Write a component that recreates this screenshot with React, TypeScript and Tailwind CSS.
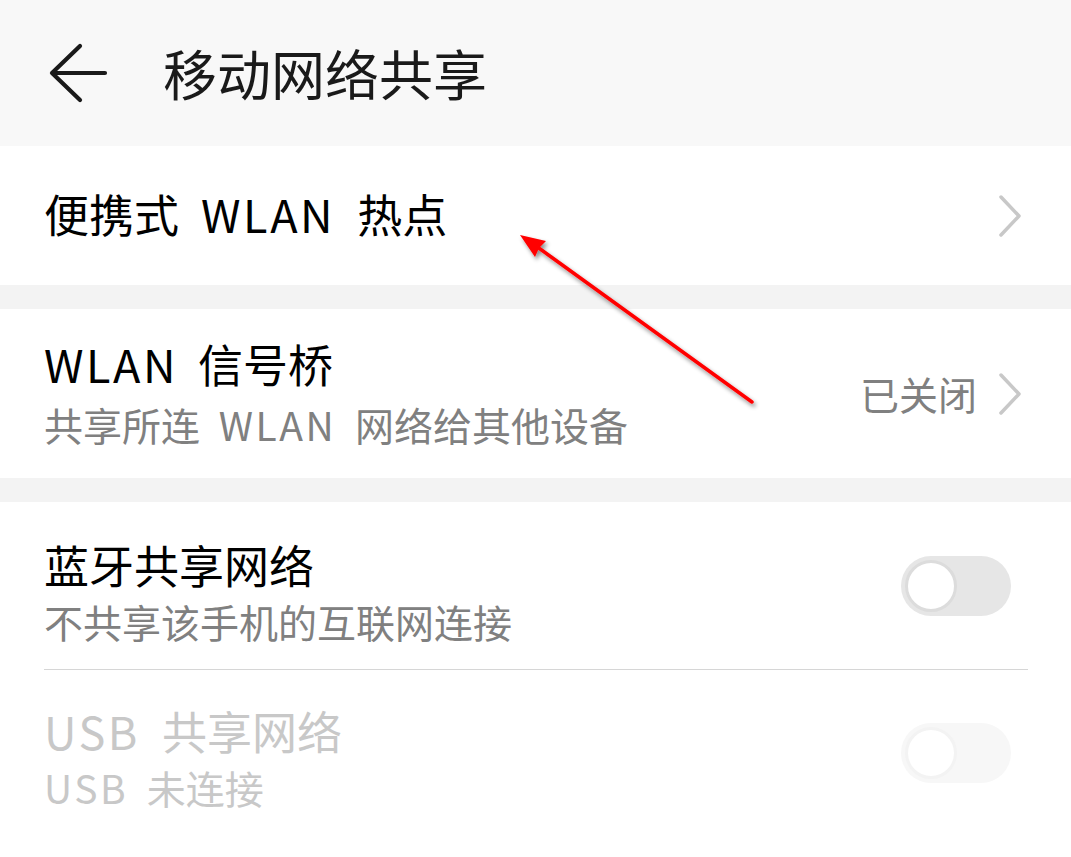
import React from 'react';

const font = { fontFamily: '"Noto Sans CJK SC", "Noto Sans", sans-serif' };

// Latin words in the reference font run a little wider than Noto's
function L({ children }: { children: React.ReactNode }) {
  return <span className="tracking-[2.5px]">{children}</span>;
}

function Chevron() {
  return (
    <svg width="26" height="44" viewBox="0 0 26 44" className="shrink-0">
      <path d="M4 3 L22 22 L4 41" fill="none" stroke="#c8c8c8" strokeWidth="3.5" strokeLinecap="round" strokeLinejoin="round" />
    </svg>
  );
}

function Toggle({ disabled }: { disabled?: boolean }) {
  return (
    <div
      className={
        disabled
          ? 'w-[110px] h-[60px] rounded-full bg-[#f7f7f7] flex items-center pl-[4px] shrink-0'
          : 'w-[110px] h-[60px] rounded-full bg-[#e6e6e6] flex items-center pl-[4px] shrink-0'
      }
    >
      <div
        className={
          disabled
            ? 'w-[52px] h-[52px] rounded-full bg-white border-[3px] border-[#f3f3f3]'
            : 'w-[52px] h-[52px] rounded-full bg-white border-[3px] border-[#dcdcdc]'
        }
      />
    </div>
  );
}

export default function App() {
  return (
    <div className="relative w-[1071px] h-[857px] overflow-hidden bg-[#f3f3f3]" style={font}>
      {/* Header */}
      <div className="h-[146px] bg-[#f8f8f8] flex items-center">
        <svg width="64" height="64" viewBox="0 0 64 64" className="ml-[46px]">
          <path d="M34 5 L6 32 L34 59 M6 32 L59 32" fill="none" stroke="#1a1a1a" strokeWidth="4.2" strokeLinecap="round" strokeLinejoin="round" />
        </svg>
        <span className="ml-[53px] text-[54px] leading-none text-[#1a1a1a]">移动网络共享</span>
      </div>

      {/* Portable hotspot */}
      <div className="h-[139px] bg-white flex items-center justify-between pl-[44px] pr-[48px]">
        <span className="text-[45px] leading-none text-black [word-spacing:12px] -mt-[4px]">
          便携式 <L>WLAN</L> 热点
        </span>
        <Chevron />
      </div>

      <div className="h-[24px]" />

      {/* WLAN bridge */}
      <div className="h-[169px] bg-white flex items-center justify-between pl-[44px] pr-[48px]">
        <div className="flex flex-col">
          <span className="text-[45px] leading-[60px] text-black [word-spacing:10px]">
            <L>WLAN</L> 信号桥
          </span>
          <span className="text-[39px] leading-[60px] text-[#808080] [word-spacing:10px]">
            共享所连 <L>WLAN</L> 网络给其他设备
          </span>
        </div>
        <div className="flex items-center gap-[20px]">
          <span className="text-[39px] leading-none text-[#808080]">已关闭</span>
          <Chevron />
        </div>
      </div>

      <div className="h-[24px]" />

      {/* Toggles */}
      <div className="bg-white h-[355px] flex flex-col">
        <div className="mx-[44px] mr-[43px] h-[168px] border-b border-[#d6d6d6] flex items-center justify-between pr-[17px]">
          <div className="flex flex-col pt-[34px] pb-[20px]">
            <span className="text-[45px] leading-[57px] text-black">蓝牙共享网络</span>
            <span className="text-[39px] leading-[57px] text-[#808080]">不共享该手机的互联网连接</span>
          </div>
          <Toggle />
        </div>
        <div className="mx-[44px] mr-[43px] h-[166px] flex items-center justify-between pr-[17px]">
          <div className="flex flex-col pt-[34px] pb-[22px]">
            <span className="text-[45px] leading-[56px] text-[#c8c8c8] [word-spacing:12px]">
              <L>USB</L> 共享网络
            </span>
            <span className="text-[39px] leading-[56px] text-[#c8c8c8] [word-spacing:10px]">
              <L>USB</L> 未连接
            </span>
          </div>
          <Toggle disabled />
        </div>
      </div>

      {/* Red annotation arrow */}
      <svg className="absolute inset-0 pointer-events-none" width="1071" height="857" viewBox="0 0 1071 857">
        <defs>
          <filter id="sh" x="-20%" y="-20%" width="140%" height="140%">
            <feDropShadow dx="2" dy="3" stdDeviation="2" floodColor="#000" floodOpacity="0.45" />
          </filter>
        </defs>
        <g filter="url(#sh)">
          <line x1="752" y1="402" x2="536" y2="246" stroke="#ff0000" strokeWidth="3.5" strokeLinecap="round" />
          <polygon points="520,235 546,241 539,248 535,257" fill="#ff0000" />
        </g>
      </svg>
    </div>
  );
}
